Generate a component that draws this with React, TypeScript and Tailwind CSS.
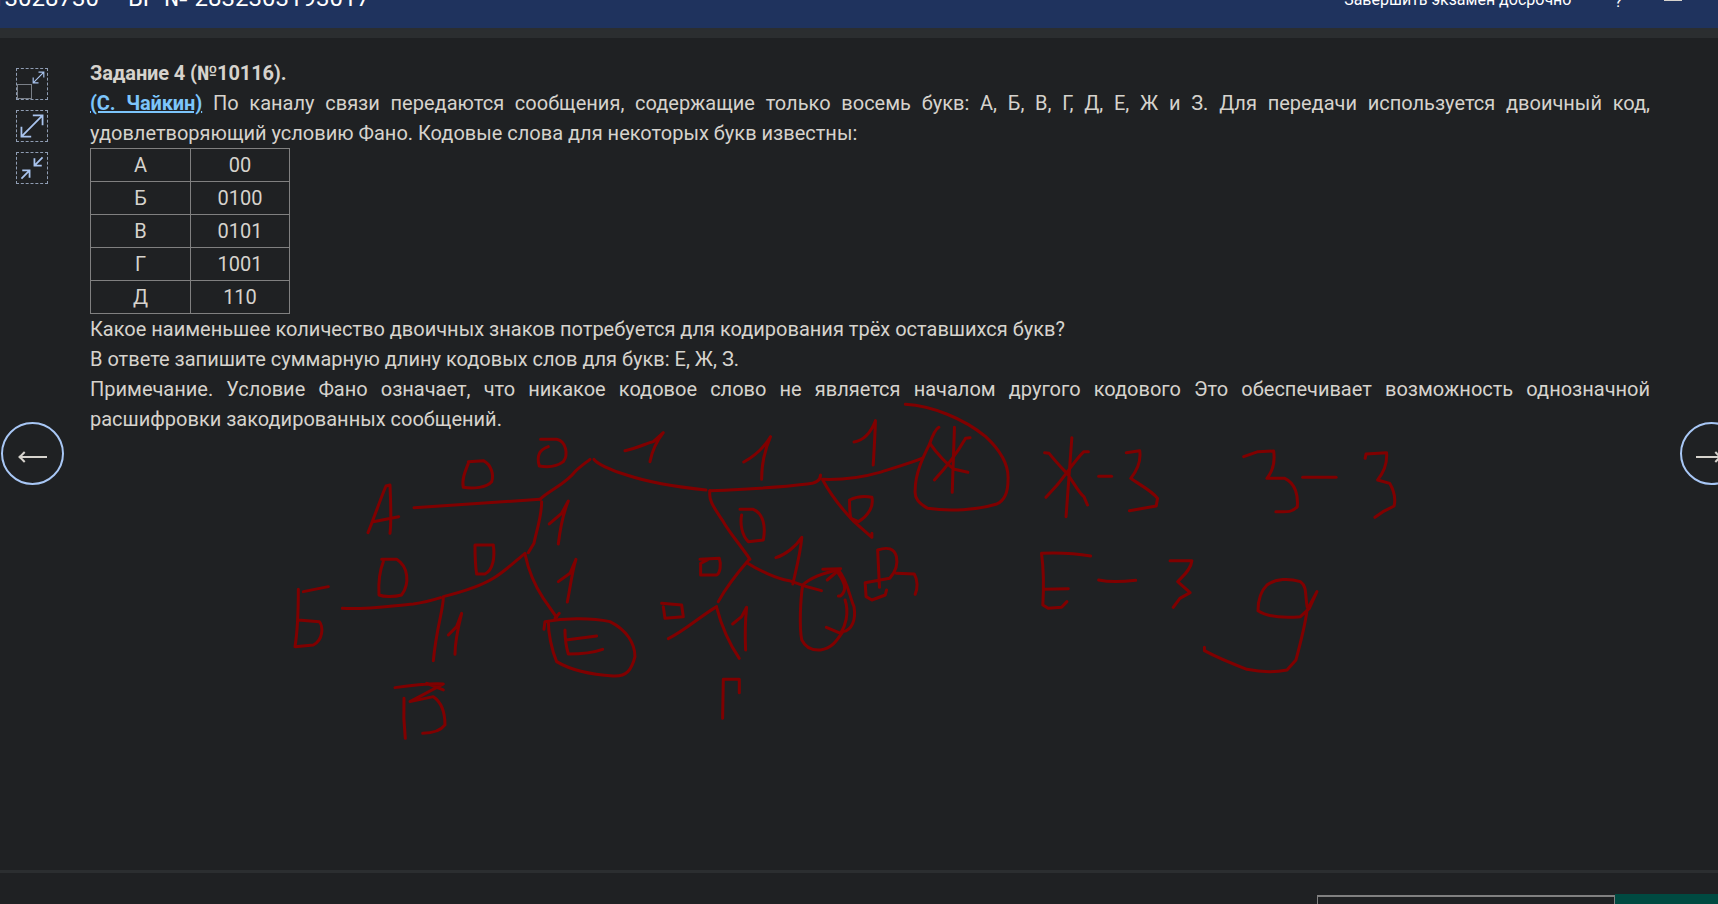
import React from 'react';

// pen strokes traced from crops, see the transforms on the two groups below
const leftStrokes = [
  'M264 398 C280 360 300 300 318 258 L330 255 C332 300 335 360 330 400 M280 365 L356 350',
  'M402 323 C480 318 600 310 780 298',
  'M565 185 L610 182 C635 195 642 225 635 245 C620 262 580 268 550 262 C545 240 555 215 565 190',
  'M782 118 L830 118 C860 125 865 165 850 185 C830 200 800 202 778 198 C770 170 775 150 805 140',
  'M780 298 C810 270 860 250 885 215 C900 200 915 190 930 178',
  'M942 178 C950 190 990 210 1040 225 C1100 245 1200 262 1278 270',
  'M1035 152 C1070 145 1100 130 1120 125 L1150 98 C1125 130 1115 160 1110 185',
  'M1290 272 C1285 300 1300 320 1330 365 C1350 400 1385 440 1410 478',
  'M1380 328 L1420 328 C1450 340 1458 380 1450 420 L1405 425 C1385 405 1380 370 1385 345',
  'M785 305 C785 350 770 390 762 430 L745 458',
  'M808 372 L845 340 L865 303 C850 340 840 390 835 432',
  'M585 435 L640 435 C645 470 640 510 615 522 L590 522 C585 490 585 460 585 435',
  'M490 590 C550 575 600 560 640 535 C680 510 710 480 735 460',
  'M187 625 C250 630 330 618 400 612 C430 608 460 600 482 593',
  'M305 478 L350 478 C385 500 390 550 365 585 C340 592 310 590 297 585 C295 550 300 510 310 485',
  'M55 568 C55 620 55 680 45 740 L100 735 C130 720 130 680 118 665 L55 660 M70 575 L145 560',
  'M490 592 C490 630 470 680 460 782',
  'M505 705 L530 680 L545 640 C535 680 525 720 525 763',
  'M735 462 C745 510 760 550 790 595 L830 652 M838 640 L825 655',
  'M835 545 L870 520 L888 478 C875 520 870 570 862 606',
  'M792 688 L795 665 C850 655 930 652 990 665 C1040 690 1065 730 1065 770 C1055 810 1040 830 1000 828 C950 825 880 815 830 785 C815 750 805 700 805 665',
  'M855 690 C855 720 860 745 865 762 C900 762 940 758 968 748 M858 720 L950 708',
  'M345 863 C400 855 450 850 490 852 L390 905 L460 890 C490 910 495 950 495 975 C480 995 450 1000 428 1000 M372 895 C370 940 372 980 376 1015 M440 850 L490 870',
  'M1328 955 L1330 838 L1378 838 L1378 878',
  'M1358 672 L1385 650 L1400 622 C1395 670 1395 710 1397 750',
  'M1310 622 C1320 660 1340 720 1378 775',
  'M1260 478 L1318 475 C1325 495 1320 520 1310 525 L1262 525 L1262 490 L1285 478',
  'M1145 610 L1205 615 L1210 650 L1155 655 L1150 620',
  'M1165 716 C1210 695 1260 650 1310 620',
  'M1408 478 C1380 510 1340 560 1315 605',
];

const rightStrokes = [
  'M460 13 C520 18 590 55 640 110 C680 160 692 200 690 240 C690 270 685 300 665 312 C620 330 560 335 510 325 C490 310 480 295 482 270 C482 220 500 170 515 130 C520 110 525 90 535 82',
  'M570 82 L565 277 M605 113 L595 115 C580 150 560 190 525 240 M515 130 C530 160 555 195 570 208 L600 217',
  'M22 272 C100 268 180 262 240 252 C260 250 270 240 270 225 M275 238 C330 240 370 230 400 218 C430 205 470 190 497 175',
  'M98 186 C120 170 140 150 158 110 C145 150 138 190 138 238',
  'M345 126 C370 120 385 90 393 62 C392 110 390 150 388 195',
  'M275 240 C295 290 320 330 345 365 L385 412 M385 400 L385 412',
  'M335 300 C350 290 370 288 385 292 C390 320 375 350 355 365 L338 355 C335 340 335 320 335 300',
  'M170 473 C190 465 215 440 228 412 C225 460 215 510 208 552',
  'M105 488 C130 510 170 535 200 542 C225 555 250 565 272 572',
  'M230 555 C250 530 280 518 310 510 C330 540 335 590 345 620 C350 660 340 690 320 695 C305 725 295 745 270 750 C250 752 235 740 228 720 C222 680 225 600 230 555',
  'M275 508 L315 506 L285 540 M310 520 C325 550 330 570 315 588 L310 588 M325 600 C335 640 325 680 315 700 L283 682',
  'M398 450 L402 562 M398 450 C420 440 435 445 440 470 C445 500 435 520 425 535 L370 548 L372 590 L385 600 L415 585 L418 570 M440 520 L480 522 C488 540 488 565 482 583',
  'M833 113 L820 350 M772 158 L782 160 C800 190 815 210 825 225 C840 255 850 280 860 290 L868 315 M870 155 L860 155 C840 180 825 215 800 255 L775 292',
  'M893 229 L922 229',
  'M955 158 L985 152 C988 180 980 210 965 235 C985 255 1010 270 1025 295 L1022 318 L962 332',
  'M1218 170 L1250 155 L1285 153 C1288 180 1285 210 1270 235 L1310 235 C1335 250 1340 290 1338 320 C1325 340 1310 335 1290 335',
  'M1350 232 L1425 232',
  'M1490 175 L1492 162 L1538 158 C1540 190 1530 220 1518 240 L1545 250 C1558 280 1558 300 1555 318 L1530 335 L1512 352',
  'M875 468 C840 460 800 458 765 460 C770 510 770 570 768 615 L780 625 L810 622 L822 605 M770 568 L825 566',
  'M893 540 C920 548 950 545 976 541',
  'M1053 482 L1102 482 C1100 510 1080 530 1070 545 L1098 578 L1075 595 L1060 622',
  'M1360 620 C1355 580 1360 560 1345 545 C1320 535 1290 535 1270 555 C1255 575 1250 600 1250 632 C1270 650 1300 655 1345 650 L1365 625 L1382 575 L1360 630 C1355 680 1345 730 1335 780 L1315 810 C1280 820 1250 815 1225 808 C1190 790 1155 770 1130 752 L1130 742',
];

const codes = [
  ['А', '00'],
  ['Б', '0100'],
  ['В', '0101'],
  ['Г', '1001'],
  ['Д', '110'],
];

const Arrow = ({ d }: { d: string }) => (
  <svg viewBox="0 0 32 32" className="h-full w-full" fill="none" stroke="#a9c4ee" strokeWidth="2.2">
    <path d={d} />
  </svg>
);

const App = () => {
  return (
    <div className="relative flex h-[904px] flex-col overflow-hidden bg-[#1f2123] font-['Roboto',sans-serif] text-[20px] leading-[30px] text-[#d6d3cd]">
      <header className="flex h-[28px] shrink-0 items-start overflow-hidden bg-[#1f335e] text-white">
        <div className="-ml-[9px] -mt-[17px] flex gap-[29px] text-[24px] leading-[30px]">
          <span>13028730</span>
          <span>ВР № 2832303193017</span>
        </div>
        <span className="-mt-[15px] ml-auto text-[16px] leading-[30px]">Завершить экзамен досрочно</span>
        <span className="-mt-[13px] ml-[43px] text-[16px] leading-[30px]">?</span>
        <div className="ml-[42px] mr-[36px] h-px w-[18px] bg-[#d6d3cd]" />
      </header>
      <div className="h-[10px] shrink-0 bg-[#2b2e30]" />

      <main className="flex flex-1 pt-[20px]">
        <aside className="flex w-[90px] shrink-0 flex-col gap-[10px] pl-[16px] pt-[10px]">
          <div className="relative h-[32px] w-[32px] border border-dashed border-[#8f9db3]">
            <div className="absolute bottom-0 left-0 h-[15px] w-[15px] border border-[#7a7f87]" />
            <div className="absolute right-0 top-0 h-[17px] w-[17px]">
              <Arrow d="M6 26 L26 6 M16 6 H26 V16 M6 16 V26 H16" />
            </div>
          </div>
          <div className="h-[32px] w-[32px] border border-dashed border-[#8f9db3] p-[2px]">
            <Arrow d="M3 29 L29 3 M17 3 H29 V15 M3 17 V29 H15" />
          </div>
          <div className="h-[32px] w-[32px] border border-dashed border-[#8f9db3] p-[2px]">
            <Arrow d="M3 29 L13 19 M4 19 H13 V28 M29 3 L19 13 M19 4 V13 H28" />
          </div>
        </aside>

        <section className="w-[1560px]">
          <h2 className="font-bold tracking-[-0.12px]">Задание 4 (№10116).</h2>
          <p className="text-justify">
            <a className="font-bold tracking-[-0.12px] text-[#7cc5fb] underline">(С. Чайкин)</a> По каналу связи
            передаются сообщения, содержащие только восемь букв: А, Б, В, Г, Д, Е, Ж и З. Для передачи используется
            двоичный код, удовлетворяющий условию Фано. Кодовые слова для некоторых букв известны:
          </p>
          <table className="w-[200px] table-fixed border-collapse">
            <tbody>
              {codes.map(([letter, code]) => (
                <tr key={letter} className="h-[33px]">
                  <td className="w-[100px] border border-[#808080] p-0 text-center leading-[32px]">{letter}</td>
                  <td className="border border-[#808080] p-0 text-center leading-[32px]">{code}</td>
                </tr>
              ))}
            </tbody>
          </table>
          <p>Какое наименьшее количество двоичных знаков потребуется для кодирования трёх оставшихся букв?</p>
          <p>В ответе запишите суммарную длину кодовых слов для букв: Е, Ж, З.</p>
          <p className="text-justify">
            Примечание. Условие Фано означает, что никакое кодовое слово не является началом другого кодового Это
            обеспечивает возможность однозначной расшифровки закодированных сообщений.
          </p>
        </section>
      </main>

      <footer className="flex h-[34px] shrink-0 items-start justify-end border-t-[3px] border-[#2b2e30]">
        <div className="mt-[22px] h-[12px] w-[298px] border-l border-r border-t-2 border-[#808080]" />
        <div className="mt-[21px] h-[13px] w-[103px] bg-[#004a41]" />
      </footer>

      <div className="absolute left-px top-[422px] h-[63px] w-[63px] rounded-full border-2 border-[#a8c7f5]">
        <div className="absolute left-[16px] top-[32px] h-[2px] w-[28px] bg-[#d6d3cd]" />
        <div className="absolute left-[17px] top-[29px] h-[8px] w-[8px] rotate-45 border-b-2 border-l-2 border-[#d6d3cd]" />
      </div>
      <div className="absolute left-[1680px] top-[422px] h-[63px] w-[63px] rounded-full border-2 border-[#a8c7f5]">
        <div className="absolute left-[14px] top-[32px] h-[2px] w-[28px] bg-[#d6d3cd]" />
        <div className="absolute left-[30px] top-[29px] h-[8px] w-[8px] rotate-45 border-r-2 border-t-2 border-[#d6d3cd]" />
      </div>

      <svg className="pointer-events-none absolute left-0 top-0 h-[904px] w-[1718px]" viewBox="0 0 1718 904" fill="none" stroke="#800000" strokeWidth="3" strokeLinecap="round" strokeLinejoin="round">
        <g transform="translate(280 400) scale(0.3333)">
          {leftStrokes.map((d, i) => (
            <path key={i} d={d} vectorEffect="non-scaling-stroke" />
          ))}
        </g>
        <g transform="translate(700 400) scale(0.4464 0.3333)">
          {rightStrokes.map((d, i) => (
            <path key={i} d={d} vectorEffect="non-scaling-stroke" />
          ))}
        </g>
      </svg>
    </div>
  );
};

export default App;
